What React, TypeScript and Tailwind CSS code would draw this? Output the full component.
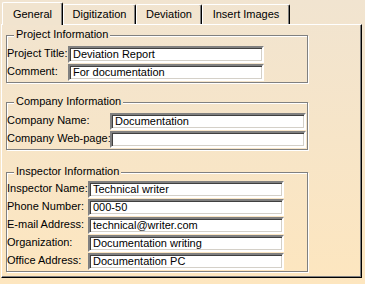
import React from "react";

const Field = ({ v }: { v?: string }) => (
  <div className="h-[17px] border-2 border-t-[#808080] border-l-[#808080] border-b-white border-r-white shadow-[inset_1px_1px_0_#404040,inset_-1px_-1px_0_#d4d0c8] bg-white pl-[3px] leading-[13px] text-black whitespace-nowrap overflow-hidden">
    {v}
  </div>
);

type Row = [string, string];

function Group({
  title,
  legendBg,
  box,
  cols,
  rows,
}: {
  title: string;
  legendBg: string;
  box: string;
  cols: string;
  rows: Row[];
}) {
  return (
    <div
      className={`relative ml-[4px] w-[302px] border border-[#808080] shadow-[1px_1px_0_#fff,inset_1px_1px_0_#fff] pb-[1px] ${box}`}
    >
      <span className={`absolute left-[7px] -top-[8px] px-[2px] leading-[13px] whitespace-nowrap ${legendBg}`}>
        {title}
      </span>
      <div className={`grid ${cols} gap-y-px items-center`}>
        {rows.map(([l, v]) => (
          <React.Fragment key={l}>
            <div className="whitespace-nowrap leading-[13px] -mt-[2px]">{l}</div>
            <Field v={v} />
          </React.Fragment>
        ))}
      </div>
    </div>
  );
}

const Tab = ({ label, w }: { label: string; w: string }) => (
  <div
    className={`h-[20px] ${w} border-l border-t border-white border-r border-r-black shadow-[inset_-1px_0_0_#808080] rounded-t-[2px] flex items-center justify-center leading-[13px] whitespace-nowrap`}
  >
    {label}
  </div>
);

export default function App() {
  return (
    <div className="w-[365px] h-[284px] overflow-hidden bg-linear-to-b from-[#f1e4d0] to-[#fde6bf] font-['Liberation_Sans',Arial,sans-serif] text-[11px] text-black">
      <div className="flex items-end h-[24px] pl-[2px]">
        <div className="relative z-10 h-[23px] -mb-px w-[61px] border-l border-t border-white border-r border-r-black shadow-[inset_-1px_0_0_#808080] rounded-t-[2px] bg-[#f1e4cf] flex items-center justify-center leading-[13px]">
          General
        </div>
        <Tab label="Digitization" w="w-[73px]" />
        <Tab label="Deviation" w="w-[66px]" />
        <Tab label="Insert Images" w="w-[88px]" />
      </div>
      <div className="ml-[1px] w-[361px] h-[254px] border border-t-white border-l-white border-r-black border-b-black shadow-[inset_-1px_-1px_0_#808080] flex flex-col pt-[10px]">
        <Group
          title="Project Information"
          legendBg="bg-[#f2e4ce]"
          box="pt-[10px]"
          cols="grid-cols-[61px_196px]"
          rows={[
            ["Project Title:", "Deviation Report"],
            ["Comment:", "For documentation"],
          ]}
        />
        <Group
          title="Company Information"
          legendBg="bg-[#f5e5ca]"
          box="pt-[10px] mt-[19px]"
          cols="grid-cols-[103px_196px]"
          rows={[
            ["Company Name:", "Documentation"],
            ["Company Web-page:", ""],
          ]}
        />
        <Group
          title="Inspector Information"
          legendBg="bg-[#f8e5c6]"
          box="pt-[8px] mt-[22px]"
          cols="grid-cols-[81px_196px]"
          rows={[
            ["Inspector Name:", "Technical writer"],
            ["Phone Number:", "000-50"],
            ["E-mail Address:", "technical@writer.com"],
            ["Organization:", "Documentation writing"],
            ["Office Address:", "Documentation PC"],
          ]}
        />
      </div>
    </div>
  );
}
